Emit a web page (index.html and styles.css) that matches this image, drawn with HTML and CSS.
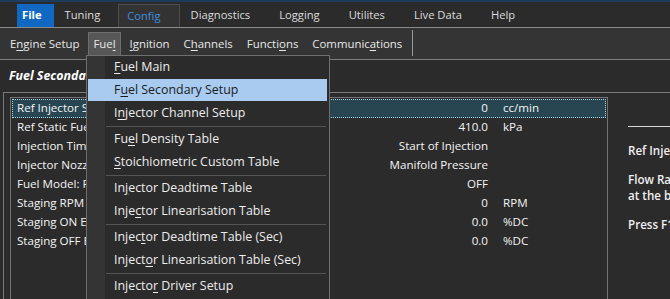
FILE: index.html
```html
<!DOCTYPE html>
<html>
<head>
<meta charset="utf-8">
<link rel="stylesheet" href="styles.css">
</head>
<body>
<div class="menubar">
  <span class="tab tab-file">File</span>
  <span class="tab">Tuning</span>
  <span class="tab tab-active">Config</span>
  <span class="tab">Diagnostics</span>
  <span class="tab">Logging</span>
  <span class="tab">Utilites</span>
  <span class="tab">Live Data</span>
  <span class="tab">Help</span>
</div>
<div class="toolbar">
  <span class="tool">E<u>n</u>gine Setup</span>
  <span class="tool tool-open">Fue<u>l</u></span>
  <span class="tool"><u>I</u>gnition</span>
  <span class="tool">C<u>h</u>annels</span>
  <span class="tool">Functi<u>o</u>ns</span>
  <span class="tool">Communic<u>a</u>tions</span>
  <span class="tool-sep"></span>
</div>
<div class="page">
  <div class="page-title">Fuel Secondary Setup</div>
  <div class="group">
    <div class="grid">
      <div class="row row-sel"><span class="lbl">Ref Injector Size</span><span class="val">0</span><span class="unit">cc/min</span></div>
      <div class="row"><span class="lbl">Ref Static Fuel Pressure</span><span class="val">410.0</span><span class="unit">kPa</span></div>
      <div class="row"><span class="lbl">Injection Timing Mode</span><span class="val">Start of Injection</span><span class="unit"></span></div>
      <div class="row"><span class="lbl">Injector Nozzle Pressure Ref</span><span class="val">Manifold Pressure</span><span class="unit"></span></div>
      <div class="row"><span class="lbl">Fuel Model: Fuel Temp Comp</span><span class="val">OFF</span><span class="unit"></span></div>
      <div class="row"><span class="lbl">Staging RPM Threshold</span><span class="val">0</span><span class="unit">RPM</span></div>
      <div class="row"><span class="lbl">Staging ON Effective DC</span><span class="val">0.0</span><span class="unit">%DC</span></div>
      <div class="row"><span class="lbl">Staging OFF Effective DC</span><span class="val">0.0</span><span class="unit">%DC</span></div>
    </div>
    <div class="help">
      <div class="help-rule"></div>
      <p class="help-text">Ref Injector Size</p>
      <p class="help-text">Flow Rate of the injector<br>at the base fuel pressure</p>
      <p class="help-text">Press F1 for more help</p>
    </div>
  </div>
</div>
<div class="dropdown">
  <div class="item"><u>F</u>uel Main</div>
  <div class="item item-hot">F<u>u</u>el Secondary Setup</div>
  <div class="item">I<u>n</u>jector Channel Setup</div>
  <div class="sep"></div>
  <div class="item">Fu<u>e</u>l Density Table</div>
  <div class="item"><u>S</u>toichiometric Custom Table</div>
  <div class="sep"></div>
  <div class="item">In<u>j</u>ector Deadtime Table</div>
  <div class="item">Inje<u>c</u>tor Linearisation Table</div>
  <div class="sep"></div>
  <div class="item">Injec<u>t</u>or Deadtime Table (Sec)</div>
  <div class="item">Inject<u>o</u>r Linearisation Table (Sec)</div>
  <div class="sep"></div>
  <div class="item">Injecto<u>r</u> Driver Setup</div>
</div>
</body>
</html>
```
FILE: styles.css
```css
html, body {
  margin: 0;
  padding: 0;
}
body {
  width: 670px;
  height: 299px;
  overflow: hidden;
  background: #2b2b2b;
  color: #ececec;
  font-family: "Open Sans", "Noto Sans", sans-serif;
  font-size: 11.6px;
  position: relative;
}
u {
  text-decoration-thickness: 1px;
  text-underline-offset: 2px;
}

/* top menu bar */
.menubar {
  display: flex;
  align-items: flex-end;
  height: 25px;
  border-top: 2px solid #1d3b5c;
  border-bottom: 1px solid #8a8a8a;
  background: #2b2b2b;
  font-size: 11.2px;
}
.tab {
  height: 23px;
  line-height: 22px;
  padding: 0 18px 0 11px;
  color: #dcdcdc;
  box-sizing: border-box;
}
.tab-file {
  margin-left: 17px;
  padding: 0 12px 0 5px;
  background: #1168c2;
  color: #fff;
  font-weight: 700;
}
.tab-active {
  padding-left: 8px;
  background: #333;
  border: 1px solid #4e4e4e;
  border-bottom: none;
  color: #3b8ede;
  line-height: 21px;
}

/* toolbar */
.toolbar {
  display: flex;
  align-items: flex-start;
  gap: 4px;
  height: 32px;
  padding: 4px 5px 0;
  box-sizing: border-box;
  background: #343434;
  border-bottom: 1px solid #7c7c7c;
  font-size: 11.4px;
}
.tool {
  height: 23px;
  line-height: 23px;
  padding: 0 5px;
  color: #e8e8e8;
  box-sizing: border-box;
}
.tool-open {
  background: #575757;
  border: 1px solid #6e6e6e;
  border-bottom: none;
  line-height: 22px;
  padding: 0 4px;
}
.tool-sep {
  width: 1px;
  height: 26px;
  background: #9a9a9a;
  margin-left: 1px;
  margin-top: -2px;
}

/* page */
.page-title {
  height: 32px;
  line-height: 32px;
  padding-left: 9px;
  font-size: 12.4px;
  font-weight: 700;
  font-style: italic;
  color: #fff;
}
.group {
  display: flex;
  margin-left: 3px;
  border-top: 1px solid #7a7a7a;
  border-left: 1px solid #7a7a7a;
  height: 220px;
}
.grid {
  width: 598px;
  margin: 4px 0 0 6px;
  padding-top: 1px;
  border: 1px solid #737373;
  border-bottom: none;
  box-sizing: border-box;
}
.row {
  display: grid;
  grid-template-columns: 300px 156px 1fr;
  column-gap: 15px;
  height: 19px;
  line-height: 18px;
  margin: 0 1px;
  padding-left: 5px;
  box-sizing: border-box;
  color: #f4f4f4;
  white-space: nowrap;
}
.row-sel {
  background: #284652;
  outline: 1px dotted #a6d4ea;
  outline-offset: -1px;
}
.lbl { overflow: hidden; }
.val { text-align: right; }

.help {
  flex: 1;
  padding-left: 20px;
  overflow: hidden;
  white-space: nowrap;
}
.help-rule {
  height: 1px;
  background: #d8d8d8;
  margin-top: 33px;
}
.help-text {
  margin: 16px 0 0;
  line-height: 16px;
  font-weight: 600;
  color: #f0f0f0;
}
.help-text + .help-text {
  margin-top: 13px;
}

/* dropdown menu */
.dropdown {
  position: absolute;
  left: 86px;
  top: 55px;
  width: 244px;
  height: 260px;
  box-sizing: border-box;
  border: 1px solid #6f6f6f;
  background: linear-gradient(to right, #343434 18px, #2b2b2b 18px);
  font-size: 12.4px;
}
.item {
  height: 23px;
  line-height: 22px;
  margin: 0 2px 0 1px;
  padding-left: 26px;
  color: #ededed;
  white-space: nowrap;
}
.item-hot {
  background: #a9cbf0;
  color: #1b1b1b;
  height: 22px;
  margin-bottom: 1px;
}
.sep {
  height: 1px;
  margin: 1px 3px 1px 19px;
  background: #555;
}
```
